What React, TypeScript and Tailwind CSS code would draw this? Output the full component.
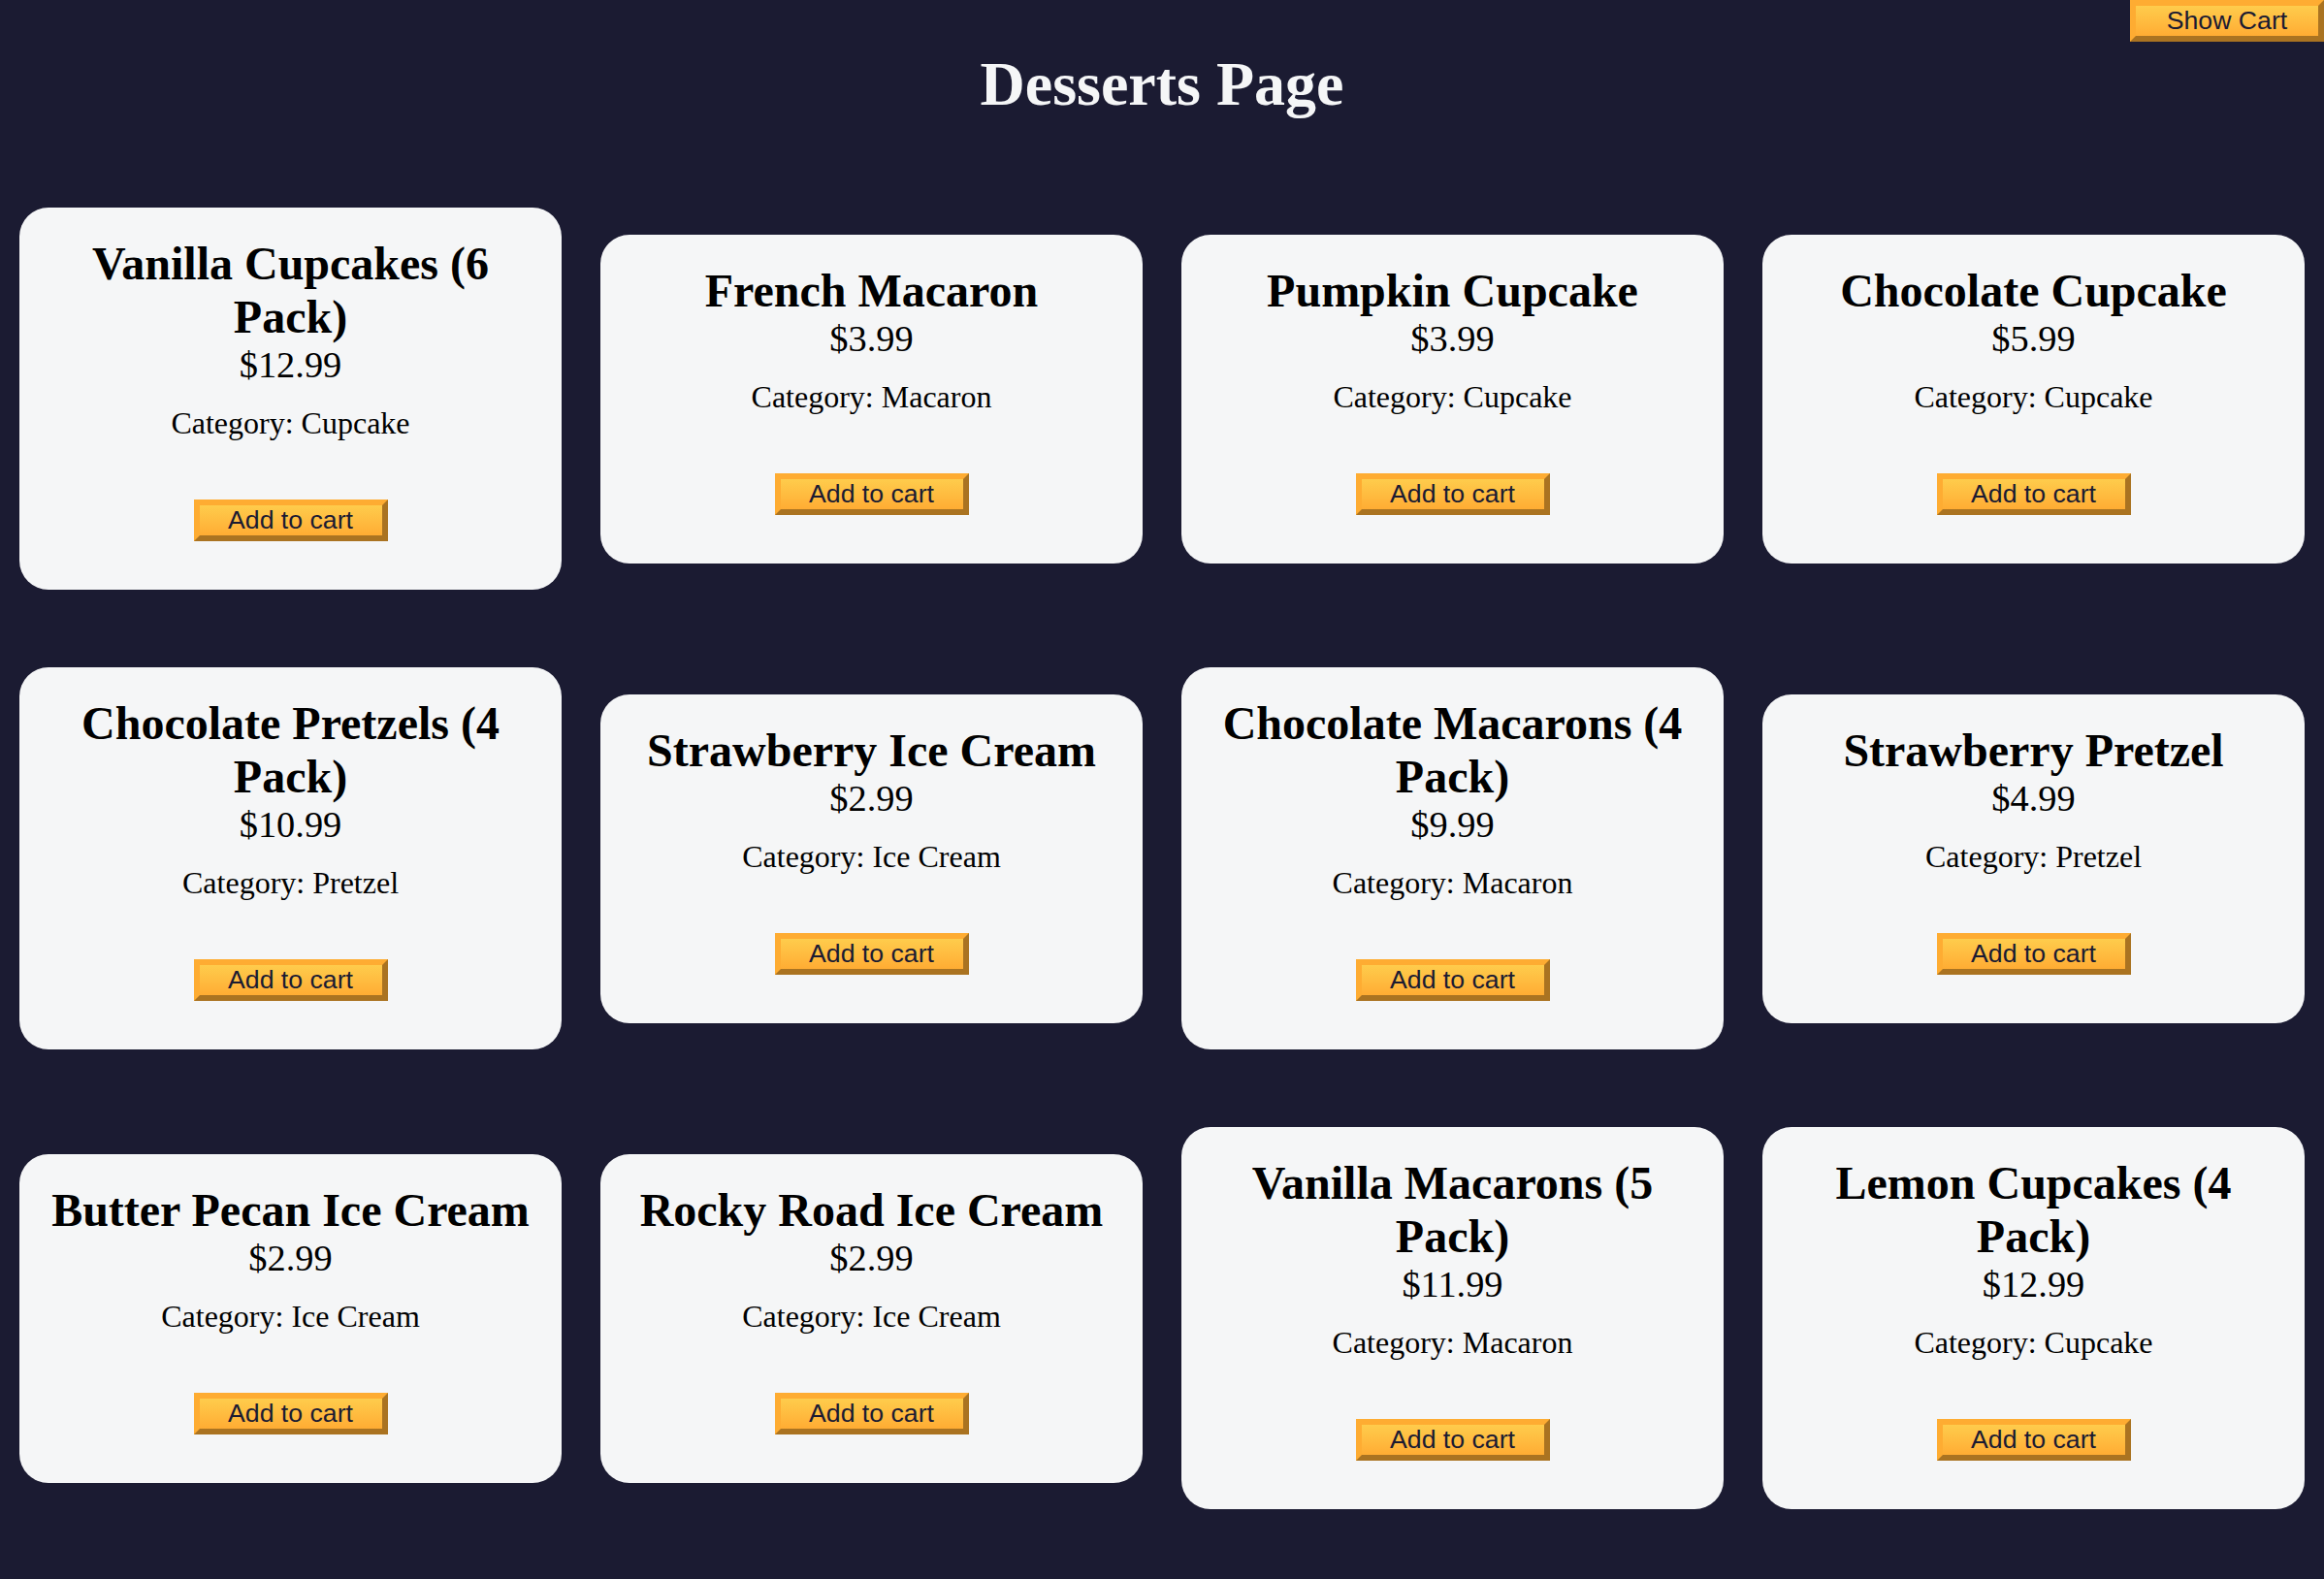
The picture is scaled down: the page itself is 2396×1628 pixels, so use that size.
const desserts = [
  { id: 1, name: "Vanilla Cupcakes (6 Pack)", price: 12.99, category: "Cupcake" },
  { id: 2, name: "French Macaron", price: 3.99, category: "Macaron" },
  { id: 3, name: "Pumpkin Cupcake", price: 3.99, category: "Cupcake" },
  { id: 4, name: "Chocolate Cupcake", price: 5.99, category: "Cupcake" },
  { id: 5, name: "Chocolate Pretzels (4 Pack)", price: 10.99, category: "Pretzel" },
  { id: 6, name: "Strawberry Ice Cream", price: 2.99, category: "Ice Cream" },
  { id: 7, name: "Chocolate Macarons (4 Pack)", price: 9.99, category: "Macaron" },
  { id: 8, name: "Strawberry Pretzel", price: 4.99, category: "Pretzel" },
  { id: 9, name: "Butter Pecan Ice Cream", price: 2.99, category: "Ice Cream" },
  { id: 10, name: "Rocky Road Ice Cream", price: 2.99, category: "Ice Cream" },
  { id: 11, name: "Vanilla Macarons (5 Pack)", price: 11.99, category: "Macaron" },
  { id: 12, name: "Lemon Cupcakes (4 Pack)", price: 12.99, category: "Cupcake" },
];

const btn =
  "block w-[200px] cursor-pointer border-[6px] [border-style:outset] border-[#feac32] bg-[#feac32] bg-linear-to-b from-[#fecc4c] to-[#ffac33] text-[#1b1b32] text-[26.67px] leading-[normal] font-['Liberation_Sans',Arial,sans-serif]";

export default function App() {
  return (
    <div className="relative flow-root min-h-screen bg-[#1b1b32] font-['Liberation_Serif','Times_New_Roman',serif]">
      {/* Cart toggle */}
      <button className={`${btn} absolute top-0 right-0`}>Show Cart</button>

      <h1 className="my-[50px] text-center text-[64px] font-bold leading-[normal] text-[#f5f6f7]">
        Desserts Page
      </h1>

      {/* Cards */}
      <div className="flex flex-row flex-wrap items-center">
        {desserts.map((d) => (
          <div
            key={d.id}
            className="grow shrink-0 basis-[21%] mx-[20px] my-[40px] p-[30px] rounded-[30px] bg-[#f5f6f7] text-center text-black"
          >
            <h2 className="text-[48px] font-bold leading-[normal]">{d.name}</h2>
            <p className="text-[38.4px] leading-[normal]">${d.price}</p>
            <p className="my-[20px] text-[32px] leading-[normal]">Category: {d.category}</p>
            <button className={`${btn} mx-auto mt-[60px] mb-[20px]`}>Add to cart</button>
          </div>
        ))}
      </div>
    </div>
  );
}
